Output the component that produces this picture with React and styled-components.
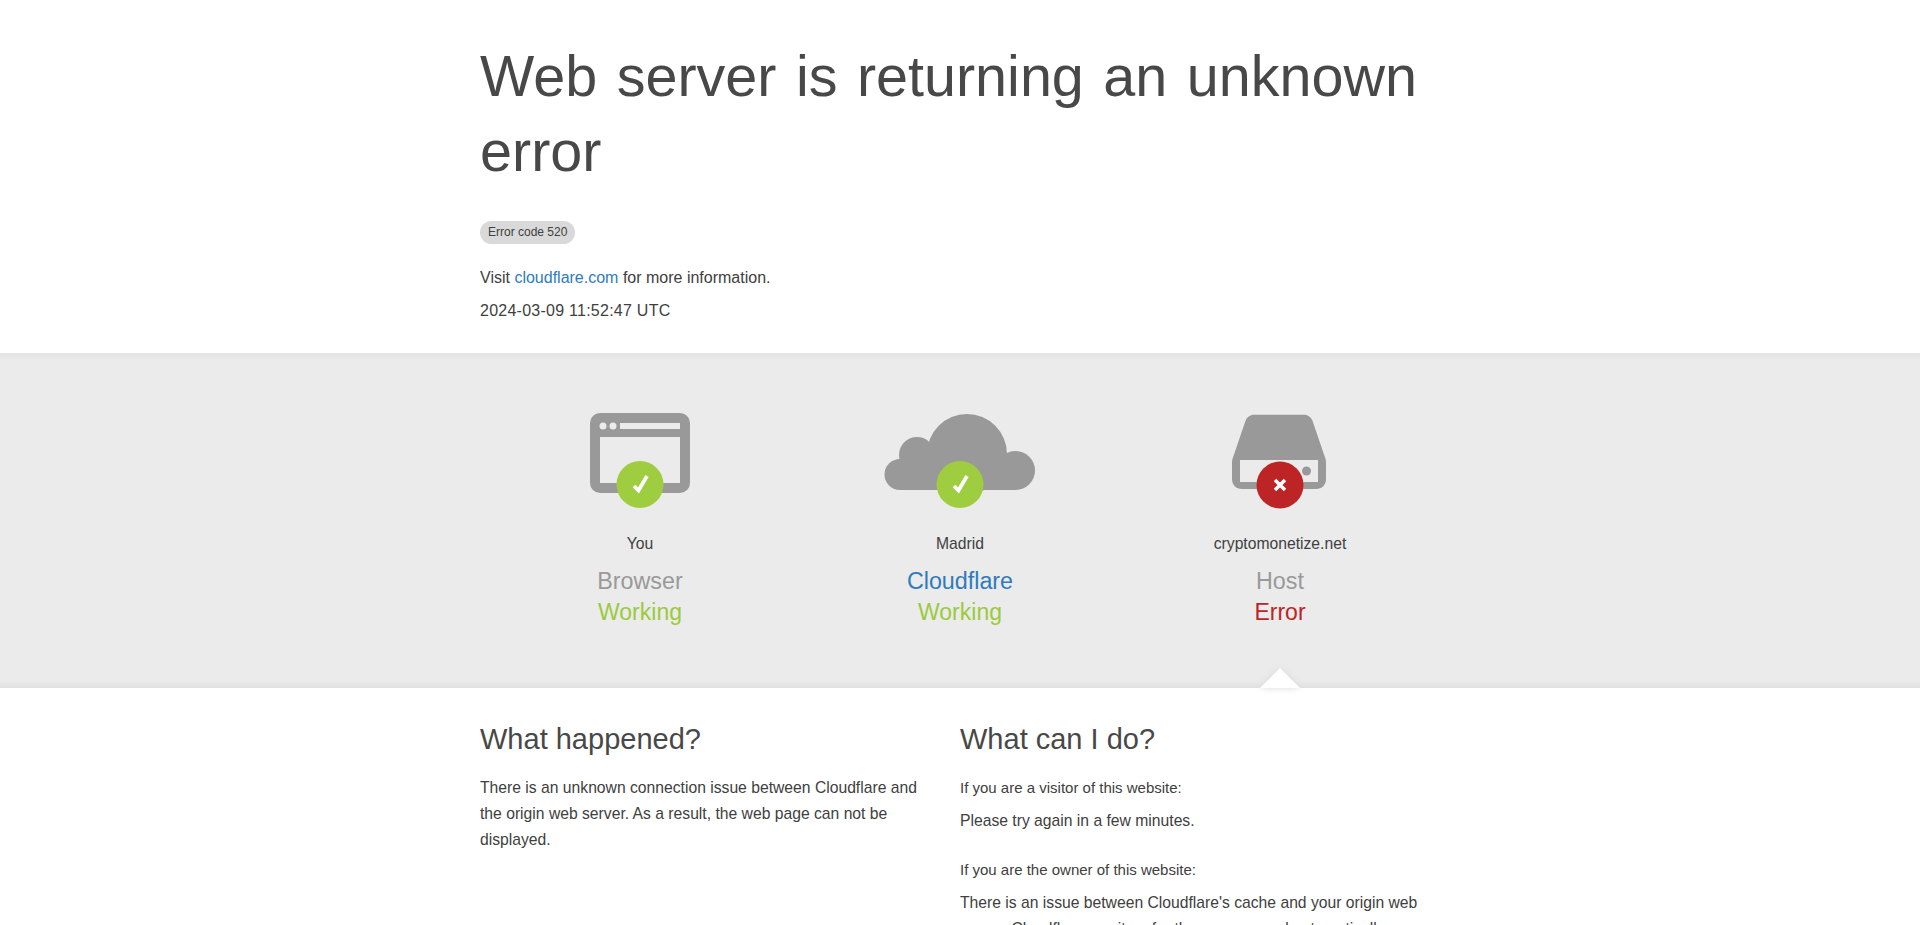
import React from "react";
import styled, { createGlobalStyle } from "styled-components";

const GlobalStyle = createGlobalStyle`
  html, body {
    margin: 0;
    padding: 0;
    background: #fff;
    color: #404040;
    font-family: "Liberation Sans", Arial, sans-serif;
    font-size: 16px;
  }
  * { box-sizing: border-box; }
`;

const Wrapper = styled.div`
  width: 960px;
  margin: 0 auto;
`;

const Header = styled.header`
  padding: 39px 0 29px;
`;

const Title = styled.h1`
  margin: 0 0 32px;
  font-size: 57.500px;
  font-weight: 400;
  line-height: 75px;
  word-spacing: 3.500px;
  color: #484848;
`;

const Pill = styled.span`
  display: inline-block;
  padding: 0 8px;
  height: 23px;
  line-height: 23px;
  border-radius: 12px;
  background: #d9d9d9;
  font-size: 12px;
  color: #404040;
`;

const Line = styled.p`
  margin: ${(p) => p.$top || 0}px 0 0;
  font-size: 15.700px;
  line-height: 26px;
`;

const HeaderLine = styled(Line)`
  font-size: 16px;
`;

const Stamp = styled(HeaderLine)`
  letter-spacing: 0.250px;
`;

const Link = styled.a`
  color: #2f7bbf;
  text-decoration: none;
`;

const Highlight = styled.section`
  position: relative;
  height: 335px;
  padding-top: 46px;
  background:
    linear-gradient(#e2e2e2, #ebebeb) top / 100% 7px no-repeat,
    linear-gradient(#ebebeb, #e1e1e1) bottom / 100% 8px no-repeat,
    #ebebeb;
`;

const StatusRow = styled.div`
  display: grid;
  grid-template-columns: repeat(3, 320px);
  width: 960px;
  margin: 0 auto;
`;

const StatusItem = styled.div`
  display: flex;
  flex-direction: column;
  align-items: center;
  text-align: center;
`;

const IconBox = styled.svg`
  display: block;
  width: 160px;
  height: 110px;
`;

const Place = styled.div`
  margin-top: 23px;
  font-size: 15.700px;
  line-height: 24px;
`;

const Name = styled.div`
  margin-top: 10px;
  font-size: 23.300px;
  line-height: 31px;
  color: ${(p) => p.$color || "#999"};
`;

const Status = styled.div`
  font-size: 23px;
  line-height: 31px;
  color: ${(p) => p.$color};
`;

const Arrow = styled.svg`
  position: absolute;
  left: 50%;
  margin-left: 300px;
  bottom: 0;
  width: 40px;
  height: 24px;
  overflow: visible;
  filter: drop-shadow(0 0 3px #d8d8d8);
`;

const Columns = styled.section`
  display: grid;
  grid-template-columns: 480px 480px;
  width: 960px;
  margin: 0 auto;
  padding-top: 31px;
`;

const Column = styled.div`
  padding-right: 20px;
`;

const SubTitle = styled.h2`
  margin: 0 0 16px;
  font-size: 29px;
  line-height: 40px;
  font-weight: 400;
  color: #484848;
`;

const Small = styled.h5`
  margin: ${(p) => p.$top || 0}px 0 0;
  font-size: 15px;
  line-height: 26px;
  font-weight: 400;
`;

const Check = () => (
  <>
    <circle cx="80" cy="85.500" r="23.500" fill="#9fcd40" />
    <path d="M74 87l4.500 4.500L87 77" stroke="#fff" strokeWidth="3.800" fill="none" />
  </>
);

const BrowserIcon = () => (
  <IconBox viewBox="0 0 160 110">
    <rect x="30" y="14" width="100" height="80" rx="10" fill="#999" />
    <rect x="40" y="38" width="80" height="46" fill="#ebebeb" />
    <rect x="60" y="24" width="60" height="6" fill="#ebebeb" />
    <circle cx="43" cy="27" r="3.500" fill="#ebebeb" />
    <circle cx="53" cy="27" r="3.500" fill="#ebebeb" />
    <Check />
  </IconBox>
);

const CloudIcon = () => (
  <IconBox viewBox="0 0 160 110">
    <g fill="#999">
      <circle cx="87" cy="55" r="40" />
      <circle cx="37" cy="56" r="18" />
      <circle cx="20" cy="75.500" r="15.500" />
      <circle cx="135.500" cy="71.500" r="19.500" />
      <rect x="20" y="60" width="115.500" height="31" />
    </g>
    <Check />
  </IconBox>
);

const ServerIcon = () => (
  <IconBox viewBox="0 0 160 110">
    <path d="M54 15.700H104c4 0 7 2.500 8.500 6L124.500 57c1 2.500 1.500 4 1.500 7V80c0 6-4 10-10 10H42c-6 0-10-4-10-10V64c0-3 .5-4.500 1.500-7L45.500 21.700c1.500-3.500 4.500-6 8.500-6z" fill="#999" />
    <rect x="40" y="61" width="78" height="22" fill="#ebebeb" />
    <circle cx="106.500" cy="72" r="4.500" fill="#999" />
    <circle cx="80" cy="86" r="23.500" fill="#bd2426" />
    <path d="M75 81l10 10M85 81L75 91" stroke="#fff" strokeWidth="3.500" fill="none" />
  </IconBox>
);

export default function App() {
  return (
    <>
      <GlobalStyle />
      <Wrapper>
        <Header>
          <Title>Web server is returning an unknown error</Title>
          <Pill>Error code 520</Pill>
          <HeaderLine $top={21}>
            Visit <Link href="#">cloudflare.com</Link> for more information.
          </HeaderLine>
          <Stamp $top={7}>2024-03-09 11:52:47 UTC</Stamp>
        </Header>
      </Wrapper>
      <Highlight>
        <StatusRow>
          <StatusItem>
            <BrowserIcon />
            <Place>You</Place>
            <Name>Browser</Name>
            <Status $color="#9bca3e">Working</Status>
          </StatusItem>
          <StatusItem>
            <CloudIcon />
            <Place>Madrid</Place>
            <Name $color="#2f7bbf">Cloudflare</Name>
            <Status $color="#9bca3e">Working</Status>
          </StatusItem>
          <StatusItem>
            <ServerIcon />
            <Place>cryptomonetize.net</Place>
            <Name>Host</Name>
            <Status $color="#bd2426">Error</Status>
          </StatusItem>
        </StatusRow>
        <Arrow viewBox="0 0 40 24">
          <path d="M0 24L20 4l20 20z" fill="#fff" />
        </Arrow>
      </Highlight>
      <Columns>
        <Column>
          <SubTitle>What happened?</SubTitle>
          <Line>
            There is an unknown connection issue between Cloudflare and the origin web server. As a result, the web page can not be displayed.
          </Line>
        </Column>
        <Column>
          <SubTitle>What can I do?</SubTitle>
          <Small>If you are a visitor of this website:</Small>
          <Line $top={7}>Please try again in a few minutes.</Line>
          <Small $top={23}>If you are the owner of this website:</Small>
          <Line $top={7}>
            There is an issue between Cloudflare's cache and your origin web server. Cloudflare monitors for these errors and automatically investigates the cause. To help support the investigation, you can pull the corresponding error log from your web server and submit it our support team. Please include the Ray ID (which is at the bottom of this error page). <Link href="#">Additional troubleshooting resources</Link>.
          </Line>
        </Column>
      </Columns>
    </>
  );
}
